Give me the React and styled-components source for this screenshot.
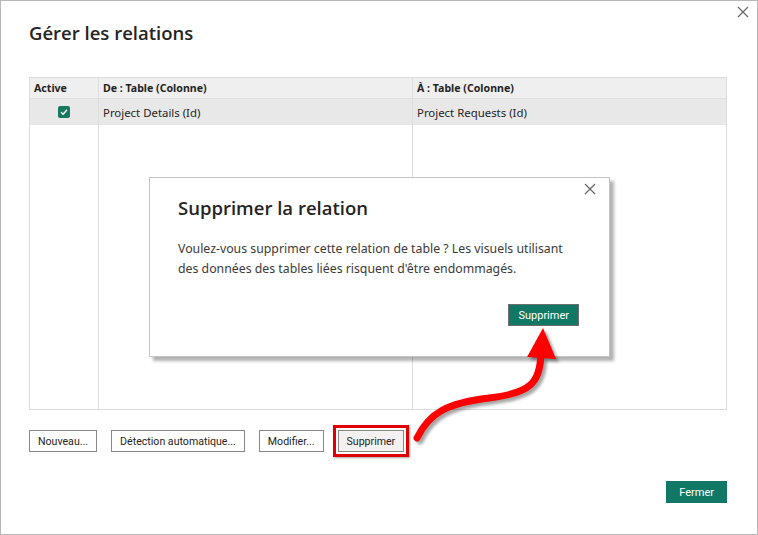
import React from "react";
import styled, { createGlobalStyle } from "styled-components";

const Global = createGlobalStyle`
  html, body { margin: 0; padding: 0; background: #fff; }
  body { font-family: "Noto Sans", "Open Sans", sans-serif; color: #252423; }
  * { box-sizing: border-box; }
`;

const Window = styled.div`
  position: relative;
  width: 758px;
  height: 535px;
  border: 1px solid #b8b8b8;
  background: #fff;
  padding: 0 30px 0 28px;
  display: flex;
  flex-direction: column;
`;

const TopBar = styled.div`
  display: flex;
  justify-content: flex-end;
  height: 20px;
  margin-right: -24px;
  padding-top: 5px;
`;

const CloseBtn = styled.button`
  border: 0;
  background: none;
  padding: 0;
  width: 14px;
  height: 14px;
  display: flex;
  cursor: pointer;
`;

const Title = styled.h1`
  margin: 0;
  font-family: "Open Sans", "Noto Sans", sans-serif;
  font-weight: 600;
  font-size: 18.5px;
  line-height: 24px;
  color: #252423;
  height: 56px;
`;

const Table = styled.div`
  display: grid;
  grid-template-columns: 68px 314px 1fr;
  grid-template-rows: 21px 26px 1fr;
  height: 333px;
  border: 1px solid #dcdcdc;
`;

const HeadCell = styled.div`
  background: #efefef;
  border-bottom: 1px solid #e0e0e0;
  border-left: ${(p) => (p.$first ? "0" : "1px solid #dedede")};
  font-family: "Noto Sans", sans-serif;
  font-weight: 700;
  font-size: 10.6px;
  padding: 0 4px;
  display: flex;
  align-items: center;
  color: #252423;
`;

const Cell = styled.div`
  background: ${(p) => (p.$selected ? "#e8e8e8" : "#fff")};
  border-left: ${(p) => (p.$first ? "0" : "1px solid #dedede")};
  padding: 0 4px;
  display: flex;
  align-items: center;
  justify-content: ${(p) => (p.$center ? "center" : "flex-start")};
  color: #252423;
  font-size: 11.4px;
`;

const Check = styled.span`
  width: 12px;
  height: 12px;
  border-radius: 2px;
  background: #17785f;
  display: inline-flex;
  align-items: center;
  justify-content: center;
`;

const ButtonRow = styled.div`
  display: flex;
  gap: 14px;
  margin-top: 20px;
  align-items: center;
`;

const Btn = styled.button`
  height: 22px;
  padding: 0 8px;
  border: 1px solid #8a8886;
  background: ${(p) => (p.$pressed ? "#f3f2f1" : "#fff")};
  font-family: Roboto, "Noto Sans", sans-serif;
  font-size: 10.6px;
  color: #252423;
  cursor: pointer;
  white-space: nowrap;
`;

const Highlight = styled.span`
  display: inline-flex;
  padding: 2px;
  margin: -5px;
  border: 3px solid #e00000;
  box-shadow: 1px 1px 2px rgba(0, 0, 0, 0.35);
`;

const Footer = styled.div`
  display: flex;
  justify-content: flex-end;
  margin-top: 29px;
`;

const Primary = styled.button`
  height: 22px;
  padding: 0 ${(p) => p.$px || 12}px;
  border: 1px solid ${(p) => (p.$outlined ? "#6e6e6e" : "#117865")};
  background: #117865;
  color: #fff;
  font-family: Roboto, "Noto Sans", sans-serif;
  font-size: 11px;
  cursor: pointer;
`;

const Dialog = styled.div`
  position: absolute;
  left: 148px;
  top: 176px;
  width: 461px;
  height: 180px;
  background: #fff;
  border: 1px solid #c4c4c4;
  box-shadow: 4px 4px 3px rgba(0, 0, 0, 0.3);
  padding: 0 30px 0 28px;
  display: flex;
  flex-direction: column;
`;

const DialogTop = styled.div`
  display: flex;
  justify-content: flex-end;
  margin-right: -19px;
  padding-top: 5px;
  height: 18px;
`;

const DialogTitle = styled.h2`
  margin: 0;
  font-family: "Open Sans", "Noto Sans", sans-serif;
  font-weight: 600;
  font-size: 18.5px;
  line-height: 24px;
  color: #252423;
`;

const DialogText = styled.p`
  margin: 19px 0 0;
  font-size: 12.3px;
  line-height: 20px;
  color: #3b3a39;
`;

const DialogActions = styled.div`
  display: flex;
  justify-content: flex-end;
  margin-top: 25px;
`;

const ArrowLayer = styled.svg`
  position: absolute;
  left: 0;
  top: 0;
  pointer-events: none;
`;

const XIcon = ({ size = 12, color = "#666" }) => (
  <svg width={size} height={size} viewBox="0 0 12 12">
    <path d="M1 1 L11 11 M11 1 L1 11" stroke={color} strokeWidth="1.2" fill="none" />
  </svg>
);

export default function App() {
  return (
    <>
      <Global />
      <Window>
        <TopBar>
          <CloseBtn aria-label="Fermer">
            <XIcon />
          </CloseBtn>
        </TopBar>
        <Title>Gérer les relations</Title>
        <Table>
          <HeadCell $first>Active</HeadCell>
          <HeadCell>De : Table (Colonne)</HeadCell>
          <HeadCell>À : Table (Colonne)</HeadCell>
          <Cell $first $selected $center>
            <Check>
              <svg width="8" height="8" viewBox="0 0 8 8">
                <path d="M1 4.2 L3.1 6.2 L7 1.8" stroke="#fff" strokeWidth="1.4" fill="none" />
              </svg>
            </Check>
          </Cell>
          <Cell $selected>Project Details (Id)</Cell>
          <Cell $selected>Project Requests (Id)</Cell>
          <Cell $first />
          <Cell />
          <Cell />
        </Table>
        <ButtonRow>
          <Btn>Nouveau...</Btn>
          <Btn>Détection automatique...</Btn>
          <Btn>Modifier...</Btn>
          <Highlight>
            <Btn $pressed>Supprimer</Btn>
          </Highlight>
        </ButtonRow>
        <Footer>
          <Primary>Fermer</Primary>
        </Footer>

        <Dialog>
          <DialogTop>
            <CloseBtn aria-label="Fermer">
              <XIcon />
            </CloseBtn>
          </DialogTop>
          <DialogTitle>Supprimer la relation</DialogTitle>
          <DialogText>
            Voulez-vous supprimer cette relation de table ? Les visuels utilisant
            <br />
            des données des tables liées risquent d'être endommagés.
          </DialogText>
          <DialogActions>
            <Primary $outlined $px={9}>Supprimer</Primary>
          </DialogActions>
        </Dialog>

        <ArrowLayer width="758" height="535" viewBox="0 0 758 535">
          <defs>
            <filter id="sh" x="-20%" y="-20%" width="140%" height="140%">
              <feGaussianBlur stdDeviation="1.5" />
            </filter>
          </defs>
          <g transform="translate(3,3)" opacity="0.35" filter="url(#sh)">
            <path d="M416 437 C 428 412 446 402 488 397 C 530 392 539 382 540 352" stroke="#000" strokeWidth="7" fill="none" strokeLinecap="round" />
            <polygon points="526,356 542,327 555,358" fill="#000" />
          </g>
          <path d="M416 437 C 428 412 446 402 488 397 C 530 392 539 382 540 352" stroke="#ff0000" strokeWidth="7" fill="none" strokeLinecap="round" />
          <polygon points="526,356 542,327 555,358" fill="#ff0000" />
        </ArrowLayer>
      </Window>
    </>
  );
}
